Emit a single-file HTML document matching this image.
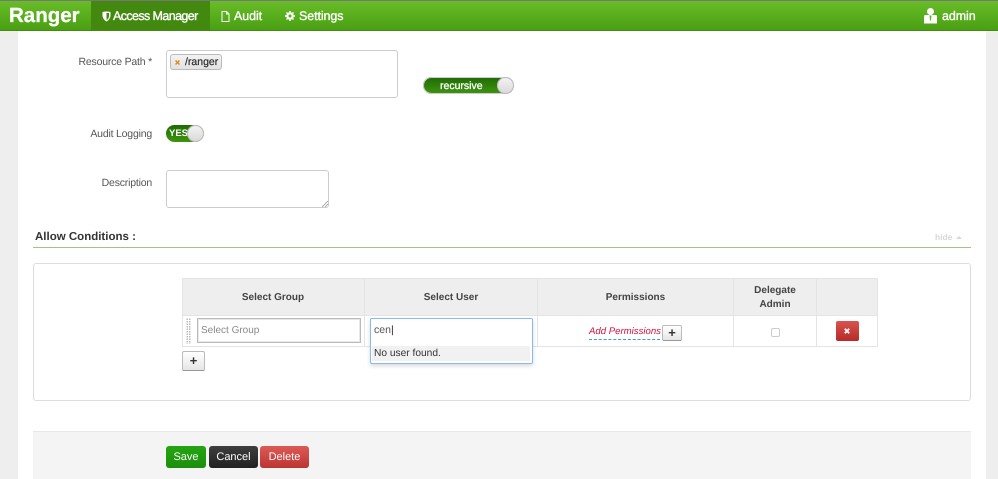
<!DOCTYPE html>
<html><head><meta charset="utf-8"><style>
html,body{margin:0;padding:0;background:#fff}
body{width:998px;height:479px;position:relative;overflow:hidden;font-family:"Liberation Sans",sans-serif;font-size:11px;color:#555;text-rendering:geometricPrecision}
.a{position:absolute;white-space:nowrap}
.lab{text-align:right;width:120px;color:#555;font-size:10.500px;line-height:14px;letter-spacing:-.2px}
.nav{color:#fff;font-size:12.500px;font-weight:normal;-webkit-text-stroke:.35px #fff;top:9px;line-height:15px;letter-spacing:-.1px}
.th{background:#eee;position:absolute;top:278px;height:37px;padding-top:2px;font-weight:bold;color:#444;text-align:center;font-size:10px;display:flex;align-items:center;justify-content:center;line-height:14px;box-sizing:border-box}
.vl{position:absolute;width:1px;top:278px;height:68px;background:#e4e4e4}
.btn{position:absolute;box-sizing:border-box;border-radius:3px;color:#fff;font-size:11px;text-align:center;top:446px;height:22px;line-height:23px}
.plus{position:absolute;box-sizing:border-box;background:linear-gradient(#fff,#e6e6e6);border:1px solid #bbb;border-bottom-color:#999;border-radius:2px;color:#333;font-weight:bold;text-align:center;font-size:13px}
</style></head><body>
<div class="a" style="left:0;top:31px;width:18px;height:448px;background:#eee"></div>
<div class="a" style="left:986px;top:31px;width:12px;height:448px;background:#eee"></div>
<div class="a" style="left:0;top:0;width:998px;height:31px;background:linear-gradient(#69bd28,#49a012);border-top:1px solid #777;border-bottom:1px solid #3f8c0e;box-sizing:border-box"></div>
<div class="a" style="left:91px;top:1px;width:119px;height:29px;background:#43880f"></div>
<div class="a" style="left:9px;top:4px;color:#fff;font-weight:bold;font-size:20.500px;line-height:24px;-webkit-text-stroke:.3px #fff">Ranger</div>
<svg class="a" style="left:102px;top:11px" width="9" height="11" viewBox="0 0 9 11"><path d="M.5 1 Q4.5 0 8.500 1 L8.500 5 Q8 8.500 4.500 10.500 Q1 8.500 .5 5Z" fill="#fff"/><path d="M4.500 2V9Q7 7.500 7 5V2Z" fill="#43880f"/></svg>
<div class="a nav" style="left:113px;letter-spacing:-.6px">Access Manager</div>
<svg class="a" style="left:221px;top:11px" width="9" height="11" viewBox="0 0 9 11"><path d="M1 .5H5.500L8 3V10.500H1ZM5.500 .5V3H8" fill="none" stroke="#fff"/></svg>
<div class="a nav" style="left:234px">Audit</div>
<svg class="a" style="left:285px;top:11px" width="10" height="10" viewBox="0 0 10 10"><circle cx="5" cy="5" r="2.800" fill="none" stroke="#fff" stroke-width="2"/><path d="M5 0V10M0 5H10M1.500 1.500L8.500 8.500M8.500 1.500L1.500 8.500" stroke="#fff" stroke-width="1.500"/><circle cx="5" cy="5" r="1.500" fill="#55aa18"/></svg>
<div class="a nav" style="left:299px">Settings</div>
<svg class="a" style="left:923px;top:8px" width="15" height="16" viewBox="0 0 15 16"><circle cx="7.500" cy="3.500" r="3.500" fill="#fff"/><path d="M1 8Q1 7 3 7H12Q14 7 14 8V15.500H1Z" fill="#fff"/><path d="M6.500 7.500H8.500L8 12L7.500 13L7 12Z" fill="#5ab01c"/></svg>
<div class="a nav" style="left:942px">admin</div>

<div class="a lab" style="left:32px;top:55px">Resource Path *</div>
<div class="a" style="left:166px;top:50px;width:232px;height:48px;box-sizing:border-box;border:1px solid #ccc;border-radius:3px"></div>
<div class="a" style="left:170px;top:54px;width:52px;height:16px;box-sizing:border-box;border:1px solid #bbb;border-radius:3px;background:linear-gradient(#f3f3f3,#e2e2e2);font-size:10.500px;color:#333;-webkit-text-stroke:.25px #333;line-height:14px;padding-left:14px">/ranger</div>
<svg class="a" style="left:175px;top:60px" width="5" height="5" viewBox="0 0 5 5"><path d="M.5 .5L4.500 4.500M4.500 .5L.5 4.500" stroke="#e8871e" stroke-width="1.500"/></svg>

<div class="a" style="left:423px;top:77px;width:91px;height:17px;border-radius:9px;background:linear-gradient(#1f6a06,#3f960f);box-shadow:0 0 0 1px #ccc inset;color:#fff;font-size:10.500px;-webkit-text-stroke:.3px #fff;line-height:18px;text-indent:17px">recursive</div>
<div class="a" style="left:497px;top:77px;width:17px;height:17px;border-radius:50%;background:linear-gradient(#f4f4f4,#d8d8d8);box-shadow:0 0 0 1px #bbb inset"></div>

<div class="a lab" style="left:32px;top:127px">Audit Logging</div>
<div class="a" style="left:166px;top:125px;width:38px;height:17px;border-radius:9px;background:linear-gradient(#1f6a06,#3f960f);color:#fff;font-weight:bold;font-size:9.500px;line-height:18px;text-indent:3px">YES</div>
<div class="a" style="left:187px;top:125px;width:17px;height:17px;border-radius:50%;background:linear-gradient(#f4f4f4,#d8d8d8);box-shadow:0 0 0 1px #bbb inset"></div>

<div class="a lab" style="left:32px;top:176px">Description</div>
<div class="a" style="left:166px;top:170px;width:163px;height:38px;box-sizing:border-box;border:1px solid #ccc;border-radius:3px"></div>
<svg class="a" style="left:322px;top:201px" width="6" height="6"><path d="M0 6L6 0M3 6L6 3" stroke="#888" stroke-width=".7"/></svg>

<div class="a" style="left:35px;top:230px;font-weight:bold;font-size:11.500px;line-height:14px;color:#333">Allow Conditions :</div>
<div class="a" style="left:33px;top:247px;width:938px;height:1px;background:#a2c47c"></div>
<div class="a" style="left:935px;top:232px;font-size:8.500px;color:#d8d8d8;font-weight:bold">hide</div>
<div class="a" style="left:956px;top:236px;width:0;height:0;border:3px solid transparent;border-bottom-color:#d8d8d8;border-top:0"></div>

<div class="a" style="left:33px;top:263px;width:938px;height:138px;box-sizing:border-box;border:1px solid #ddd;border-radius:3px"></div>

<div class="th" style="left:182px;width:182px">Select Group</div>
<div class="th" style="left:365px;width:172px">Select User</div>
<div class="th" style="left:538px;width:195px">Permissions</div>
<div class="th" style="left:734px;width:82px">Delegate<br>Admin</div>
<div class="th" style="left:817px;width:61px"></div>
<div class="a" style="left:182px;top:278px;width:696px;height:1px;background:#e4e4e4"></div>
<div class="a" style="left:182px;top:315px;width:696px;height:1px;background:#e4e4e4"></div>
<div class="a" style="left:182px;top:346px;width:696px;height:1px;background:#e4e4e4"></div>
<div class="vl" style="left:182px"></div><div class="vl" style="left:364px"></div><div class="vl" style="left:537px"></div><div class="vl" style="left:733px"></div><div class="vl" style="left:816px"></div><div class="vl" style="left:877px"></div>

<div class="a" style="left:186px;top:318px;width:5px;height:26px;background-image:radial-gradient(#bbb 40%,transparent 45%);background-size:2.500px 2.500px"></div>
<div class="a" style="left:197px;top:318px;width:164px;height:25px;box-sizing:border-box;border:1px solid #bbb;box-shadow:inset 0 0 0 1px #e8e8e8;color:#888;font-size:10px;line-height:24px;padding-left:3px">Select Group</div>

<div class="a" style="left:370px;top:318px;width:163px;height:46px;box-sizing:border-box;border:1px solid #8ab8f0;border-radius:2px;background:#fff;box-shadow:0 2px 4px rgba(0,0,0,.15)"></div>
<div class="a" style="left:374px;top:324px;font-size:10.500px;color:#555">cen<span style="color:#222">|</span></div>
<div class="a" style="left:372px;top:346px;width:158px;height:15px;background:#f1f1f1;color:#333;font-size:10.200px;line-height:15px;text-indent:2px">No user found.</div>

<div class="a" style="left:589px;top:325px;color:#d6113c;font-style:italic;font-size:9.600px;border-bottom:1px dashed #3a9fd0;line-height:14px;width:71px">Add Permissions</div>
<div class="plus" style="left:662px;top:325px;width:20px;height:16px;line-height:14px">+</div>
<div class="a" style="left:771px;top:328px;width:7px;height:7px;border:1px solid #ccc;border-radius:2px"></div>
<div class="a" style="left:836px;top:321px;width:23px;height:20px;border-radius:2px;background:linear-gradient(#d9534f,#b52b27)"></div>
<svg class="a" style="left:844px;top:328px" width="6" height="6" viewBox="0 0 6 6"><path d="M.8 .8L5.200 5.200M5.200 .8L.8 5.200" stroke="#fff" stroke-width="1.800"/></svg>
<div class="plus" style="left:182px;top:351px;width:23px;height:20px;line-height:17px">+</div>

<div class="a" style="left:33px;top:431px;width:938px;height:48px;background:#f4f4f4;border-top:1px solid #e8e8e8;box-sizing:border-box"></div>
<div class="btn" style="left:166px;width:40px;background:linear-gradient(#25a512,#1c8e0c)">Save</div>
<div class="btn" style="left:209px;width:49px;background:linear-gradient(#3e3e3e,#222)">Cancel</div>
<div class="btn" style="left:260px;width:49px;background:linear-gradient(#dc5a56,#bc3531)">Delete</div>
</body></html>
